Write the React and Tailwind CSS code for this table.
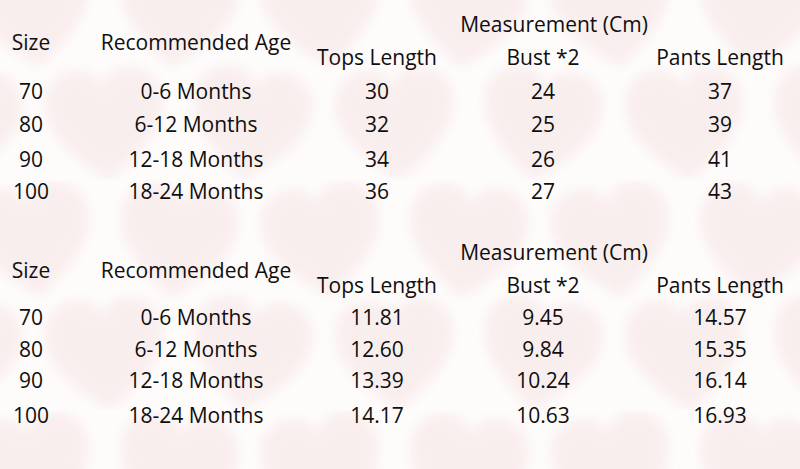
import React from "react";

const cols = ["w-[62px]", "w-[268px]", "w-[94px]", "w-[238px]", "w-[116px]"];

const cmRows = [
  ["70", "0-6 Months", "30", "24", "37"],
  ["80", "6-12 Months", "32", "25", "39"],
  ["90", "12-18 Months", "34", "26", "41"],
  ["100", "18-24 Months", "36", "27", "43"],
];

const inchRows = [
  ["70", "0-6 Months", "11.81", "9.45", "14.57"],
  ["80", "6-12 Months", "12.60", "9.84", "15.35"],
  ["90", "12-18 Months", "13.39", "10.24", "16.14"],
  ["100", "18-24 Months", "14.17", "10.63", "16.93"],
];

function HeartsBackground() {
  return (
    <svg className="absolute inset-0 w-full h-full" xmlns="http://www.w3.org/2000/svg">
      <defs>
        <filter id="soft" x="-20%" y="-20%" width="140%" height="140%">
          <feGaussianBlur stdDeviation="6" />
        </filter>
        <symbol id="heart" viewBox="0 0 100 100">
          <path d="M50 94 C20 72 3 54 3 32 C3 15 15 5 30 5 C40 5 47 11 50 19 C53 11 60 5 70 5 C85 5 97 15 97 32 C97 54 80 72 50 94 Z" />
        </symbol>
        <pattern id="hearts" x="-40" y="-50" width="290" height="230" patternUnits="userSpaceOnUse">
          <g fill="#f5e3e3" filter="url(#soft)">
            <use href="#heart" x="0" y="0" width="145" height="125" transform="rotate(-8 70 60)" />
            <use href="#heart" x="145" y="0" width="145" height="125" transform="rotate(6 215 60)" />
            <use href="#heart" x="73" y="113" width="145" height="125" transform="rotate(-4 145 175)" />
            <use href="#heart" x="218" y="113" width="145" height="125" transform="rotate(8 290 175)" />
            <use href="#heart" x="-72" y="113" width="145" height="125" transform="rotate(8 0 175)" />
          </g>
        </pattern>
      </defs>
      <rect width="100%" height="100%" fill="url(#hearts)" opacity="0.55" />
    </svg>
  );
}

function Cell({ i, children }) {
  return (
    <div className={`${cols[i]} flex justify-center whitespace-nowrap`}>{children}</div>
  );
}

function SizeTable({ rows, heights, top, rowsGap }) {
  return (
    <div className={top}>
      {/* header */}
      <div className="flex">
        <div className="flex pt-[18px]">
          <Cell i={0}>Size</Cell>
          <Cell i={1}>Recommended Age</Cell>
        </div>
        <div className="flex flex-col gap-[1px]">
          <div className="flex justify-center">Measurement (Cm)</div>
          <div className="flex">
            <Cell i={2}>Tops Length</Cell>
            <Cell i={3}>Bust *2</Cell>
            <Cell i={4}>Pants Length</Cell>
          </div>
        </div>
      </div>
      <div className={rowsGap}>
        {rows.map((r, idx) => (
          <div key={idx} className={`flex ${heights[idx]}`}>
            {r.map((v, i) => (
              <Cell key={i} i={i}>
                {v}
              </Cell>
            ))}
          </div>
        ))}
      </div>
    </div>
  );
}

export default function App() {
  return (
    <div className="relative w-[800px] h-[469px] overflow-hidden bg-[#fefbfb]">
      <HeartsBackground />
      <div className="relative text-[21px] leading-[32px] text-[#0f0f0f] font-['Open_Sans',sans-serif]">
        <SizeTable
          rows={cmRows}
          heights={["h-[33px]", "h-[35px]", "h-[32px]", "h-[32px]"]}
          top="pt-[8px]"
          rowsGap="mt-[2px]"
        />
        <SizeTable
          rows={inchRows}
          heights={["h-[32px]", "h-[31px]", "h-[35px]", "h-[32px]"]}
          top="mt-[29px]"
          rowsGap="mt-0"
        />
      </div>
    </div>
  );
}
